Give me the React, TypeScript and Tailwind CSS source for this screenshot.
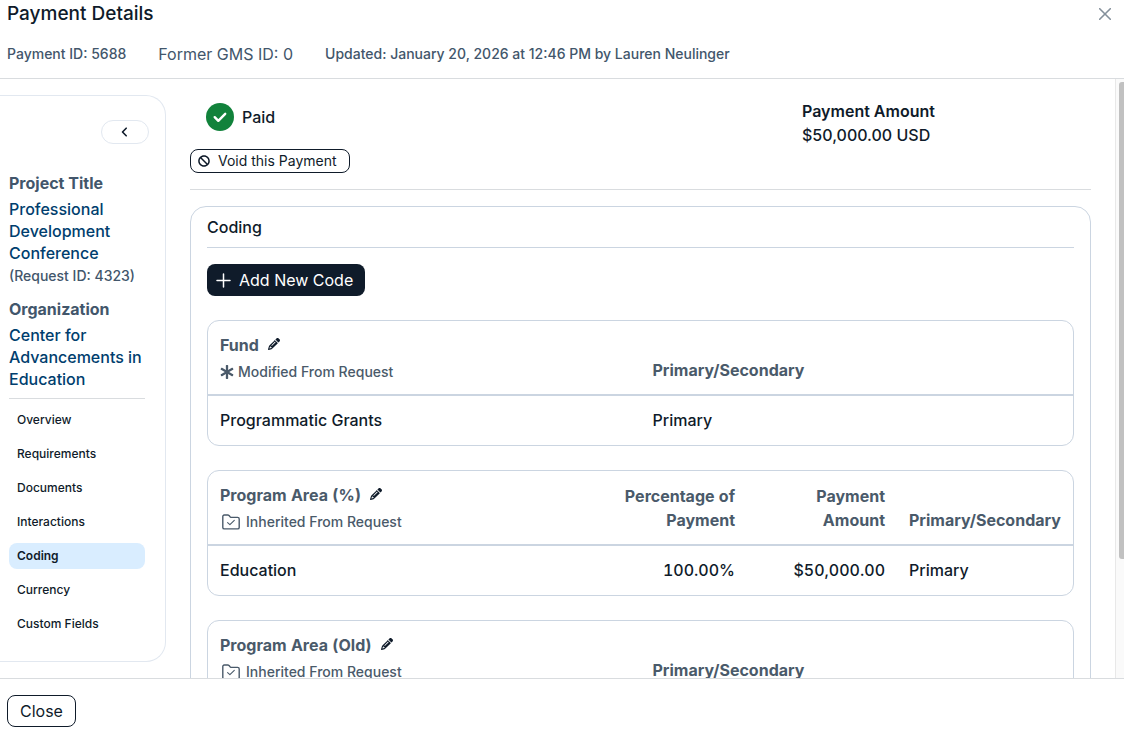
import { useState, type ReactNode } from "react";
import { FaAsterisk, FaBan } from "react-icons/fa";
import { FaPencil } from "react-icons/fa6";

const navItems = [
  "Overview",
  "Requirements",
  "Documents",
  "Interactions",
  "Coding",
  "Currency",
  "Custom Fields",
];

function FolderCheckIcon() {
  return (
    <svg
      viewBox="0 0 18 16"
      className="w-[18px] h-4 shrink-0"
      fill="none"
      stroke="currentColor"
      strokeWidth="1.4"
      strokeLinecap="round"
      strokeLinejoin="round"
      aria-hidden="true"
    >
      <path d="M2.2 1h3.6c.5 0 .9.2 1.2.5L8.300 2.900c.3.3.7.5 1.200.5h6.100c.9 0 1.600.6 1.600 1.500v8.500c0 .9-.7 1.500-1.600 1.500H2.400C1.500 14.900.8 14.300.8 13.400V2.400C.8 1.600 1.400 1 2.200 1z" />
      <path strokeWidth="1.1" d="M5.600 8.600l2.300 2.100 4.400-4.300" />
    </svg>
  );
}

function CodeTitle({
  name,
  source,
}: {
  name: string;
  source: "modified" | "inherited";
}) {
  return (
    <>
      <div className="flex items-center gap-2 h-6">
        <span>{name}</span>
        <button type="button" aria-label={`Edit ${name}`} className="pb-0.5 pl-px">
          <FaPencil className="w-3 h-3 text-[#0f1b2a]" />
        </button>
      </div>
      <div className="flex items-center h-6 mt-[3px] text-sm font-medium">
        {source === "modified" ? (
          <span className="flex items-center gap-1">
            <FaAsterisk className="w-3.5 h-3.5" />
            Modified From Request
          </span>
        ) : (
          <span className="flex items-center gap-1.5 pl-0.5">
            <FolderCheckIcon />
            Inherited From Request
          </span>
        )}
      </div>
    </>
  );
}

function CodeCard({ children }: { children: ReactNode }) {
  return (
    <div className="mt-6 border border-[#cbd5e1] rounded-xl overflow-hidden">
      <table className="w-full table-fixed text-left tabular-nums">{children}</table>
    </div>
  );
}

function SimpleCode({
  name,
  source,
  value,
}: {
  name: string;
  source: "modified" | "inherited";
  value: string;
}) {
  return (
    <CodeCard>
      <thead className="text-[#4a5a6a]">
        <tr className="border-b-2 border-[#cbd5e1]">
          <th className="w-1/2 px-3 pt-3 pb-2.5 font-bold">
            <CodeTitle name={name} source={source} />
          </th>
          <th className="px-3 py-3 align-bottom font-bold">Primary/Secondary</th>
        </tr>
      </thead>
      <tbody className="font-medium">
        <tr>
          <td className="px-3 pt-3 pb-[13px]">{value}</td>
          <td className="px-3 pt-3 pb-[13px]">Primary</td>
        </tr>
      </tbody>
    </CodeCard>
  );
}

export default function App() {
  const [active, setActive] = useState("Coding");

  return (
    <div className="h-screen flex flex-col bg-white font-['Inter',sans-serif] text-base text-[#0f1b2a]">
      <header className="shrink-0 border-b border-[#d9dcdf] pl-[7px] pr-3 pb-3">
        <div className="flex items-center justify-between h-7">
          <h1 className="text-[19px] font-medium">Payment Details</h1>
          <button type="button" aria-label="Close dialog" className="p-px">
            <svg
              viewBox="0 0 12 12"
              className="w-3 h-3"
              stroke="#84909b"
              strokeWidth="1.6"
              strokeLinecap="round"
              aria-hidden="true"
            >
              <path d="M.7.7l10.6 10.6M11.3.7L.7 11.3" />
            </svg>
          </button>
        </div>
        <div className="flex items-center gap-8 h-6 mt-3.5 text-sm font-medium text-[#42566b]">
          <span>Payment ID: 5688</span>
          <span className="text-base font-normal">Former GMS ID: 0</span>
          <span>Updated: January 20, 2026 at 12:46 PM by Lauren Neulinger</span>
        </div>
      </header>

      <div className="flex-1 min-h-0 flex">
        <aside className="w-[166px] shrink-0 self-stretch mt-4 mb-4 pt-6 pr-4 pl-[9px] border border-l-0 border-[#e2e8f0] rounded-r-[20px]">
          <div className="flex justify-end">
            <button
              type="button"
              aria-label="Collapse sidebar"
              className="flex items-center justify-center w-12 h-6 border border-[#e2e8f0] rounded-full"
            >
              <svg
                viewBox="0 0 8 10"
                className="w-2 h-2.5"
                fill="none"
                stroke="#0f1b2a"
                strokeWidth="1.6"
                strokeLinecap="round"
                strokeLinejoin="round"
                aria-hidden="true"
              >
                <path d="M5.200 1.200L1.500 5l3.700 3.800" />
              </svg>
            </button>
          </div>

          <div className="mt-[27px] mr-1">
            <h2 className="font-bold text-[#42566b]">Project Title</h2>
            <a href="#project" className="block mt-[3px] leading-[22px] font-medium text-[#003e6e]">
              Professional Development Conference
            </a>
            <p className="h-6 leading-6 text-sm font-medium text-[#42566b]">
              (Request ID: 4323)
            </p>
            <h2 className="mt-[9px] font-bold text-[#42566b]">Organization</h2>
            <a href="#organization" className="block mt-[3px] leading-[22px] font-medium text-[#003e6e]">
              Center for Advancements in Education
            </a>
          </div>

          <nav className="flex flex-col gap-2 mt-2 pt-2 mr-1 border-t border-[#d9dcdf] text-xs font-medium">
            {navItems.map((item) => (
              <a
                key={item}
                href="#section"
                onClick={() => setActive(item)}
                className={
                  item === active
                    ? "h-[26px] leading-[26px] px-2 rounded-lg bg-[#d9edff] font-semibold"
                    : "h-[26px] leading-[26px] px-2 rounded-lg"
                }
              >
                {item}
              </a>
            ))}
          </nav>
        </aside>

        <main className="flex-1 min-w-0 overflow-y-auto [scrollbar-width:none] px-6">
          <section className="flex items-start justify-between pt-5 pb-4 border-b border-[#d9dcdf]">
            <div>
              <div className="flex items-center gap-2 pl-4 pt-1 font-medium">
                <svg viewBox="0 0 28 28" className="w-7 h-7" fill="none" aria-hidden="true">
                  <circle cx="14" cy="14" r="14" fill="#11823b" />
                  <path
                    d="M8.7 14.2l3.6 3.6 6.9-7"
                    stroke="#fff"
                    strokeWidth="2.400"
                    strokeLinecap="round"
                    strokeLinejoin="round"
                  />
                </svg>
                Paid
              </div>
              <button
                type="button"
                className="flex items-center gap-2 h-6 mt-[18px] px-[7px] pr-3 border border-[#0f1b2a] rounded-lg text-sm"
              >
                <FaBan className="w-3 h-3" />
                Void this Payment
              </button>
            </div>
            <div className="w-[289px]">
              <h2 className="font-semibold">Payment Amount</h2>
              <p className="font-medium">$50,000.00 USD</p>
            </div>
          </section>

          <section className="mt-4 mb-6 px-4 pt-2 pb-6 border border-[#cbd5e1] rounded-2xl">
            <h2 className="pb-2 border-b border-[#cbd5e1] font-medium">Coding</h2>
            <button
              type="button"
              className="flex items-center gap-2 h-8 mt-4 pl-[9px] pr-3 rounded-lg bg-[#0f1b2a] text-white"
            >
              <svg
                viewBox="0 0 15 15"
                className="w-[15px] h-[15px]"
                stroke="currentColor"
                strokeWidth="1.5"
                strokeLinecap="round"
                aria-hidden="true"
              >
                <path d="M7.5 1v13M1 7.5h13" />
              </svg>
              Add New Code
            </button>

            <SimpleCode name="Fund" source="modified" value="Programmatic Grants" />

            <CodeCard>
              <thead className="text-[#4a5a6a]">
                <tr className="border-b-2 border-[#cbd5e1]">
                  <th className="px-3 pt-3 pb-2.5 font-bold">
                    <CodeTitle name="Program Area (%)" source="inherited" />
                  </th>
                  <th className="w-[150px] px-3 py-3 align-bottom text-right font-bold">
                    Percentage of Payment
                  </th>
                  <th className="w-[150px] pl-12 pr-3 py-3 align-bottom text-right font-bold">
                    Payment Amount
                  </th>
                  <th className="w-[176px] px-3 py-3 align-bottom font-bold">
                    Primary/Secondary
                  </th>
                </tr>
              </thead>
              <tbody className="font-medium">
                <tr>
                  <td className="px-3 pt-3 pb-[13px]">Education</td>
                  <td className="px-3 pt-3 pb-[13px] text-right">100.00%</td>
                  <td className="px-3 pt-3 pb-[13px] text-right">$50,000.00</td>
                  <td className="px-3 pt-3 pb-[13px]">Primary</td>
                </tr>
              </tbody>
            </CodeCard>

            <SimpleCode name="Program Area (Old)" source="inherited" value="Education" />
          </section>
        </main>

        {/* scroll track, with the thumb at the top */}
        <div className="w-[9px] shrink-0 pt-[3px] pl-[3px] border-l border-[#e8e8e8] bg-[#fafafa]">
          <div className="h-4/5 rounded-l-[3px] bg-[#c1c1c1]" />
        </div>
      </div>

      <footer className="shrink-0 px-[7px] pt-4 pb-[9px] border-t border-[#d9dcdf]">
        <button type="button" className="h-8 px-3 border border-[#0f1b2a] rounded-lg">
          Close
        </button>
      </footer>
    </div>
  );
}
